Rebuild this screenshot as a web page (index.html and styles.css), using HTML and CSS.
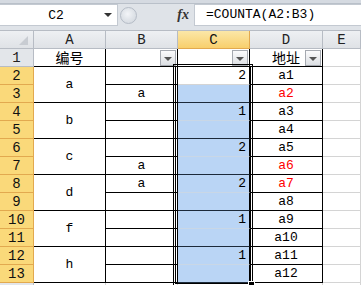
FILE: index.html
```html
<!DOCTYPE html>
<html lang="zh">
<head>
  <meta charset="UTF-8" />
  <title>COUNTA</title>
  <link rel="stylesheet" href="styles.css">
</head>
<body>

  <div class="ribbon-edge"></div>

  <div class="formula-bar">
    <div class="name-box">
      <span class="name">C2</span>
      <span class="drop"></span>
    </div>
    <div class="bar-tools">
      <span class="knob"></span>
      <span class="fx">fx</span>
    </div>
    <div class="formula">=COUNTA(A2:B3)</div>
  </div>

  <div class="sheet">
    <div class="hd corner"><span class="tri"></span></div>
    <div class="hd col">A</div>
    <div class="hd col">B</div>
    <div class="hd col on">C</div>
    <div class="hd col">D</div>
    <div class="hd col last">E</div>

    <div class="hd row">1</div>
    <div class="c b-all head">编号</div>
    <div class="c b-all"><span class="filter"></span></div>
    <div class="c b-all"><span class="filter"></span></div>
    <div class="c b-all head">地址<span class="filter"></span></div>
    <div class="c grid"></div>

    <div class="hd row on">2</div>
    <div class="c b-all merged span2">a</div>
    <div class="c b-all"></div>
    <div class="c sel active num">2</div>
    <div class="c b-all">a1</div>
    <div class="c grid"></div>

    <div class="hd row on">3</div>
    <div class="c b-all">a</div>
    <div class="c sel pair-end"></div>
    <div class="c b-all red">a2</div>
    <div class="c grid"></div>

    <div class="hd row on">4</div>
    <div class="c b-all merged span2">b</div>
    <div class="c b-all"></div>
    <div class="c sel num">1</div>
    <div class="c b-all">a3</div>
    <div class="c grid"></div>

    <div class="hd row on">5</div>
    <div class="c b-all"></div>
    <div class="c sel pair-end"></div>
    <div class="c b-all">a4</div>
    <div class="c grid"></div>

    <div class="hd row on">6</div>
    <div class="c b-all merged span2">c</div>
    <div class="c b-all"></div>
    <div class="c sel num">2</div>
    <div class="c b-all">a5</div>
    <div class="c grid"></div>

    <div class="hd row on">7</div>
    <div class="c b-all">a</div>
    <div class="c sel pair-end"></div>
    <div class="c b-all red">a6</div>
    <div class="c grid"></div>

    <div class="hd row on">8</div>
    <div class="c b-all merged span2">d</div>
    <div class="c b-all">a</div>
    <div class="c sel num">2</div>
    <div class="c b-all red">a7</div>
    <div class="c grid"></div>

    <div class="hd row on">9</div>
    <div class="c b-all"></div>
    <div class="c sel pair-end"></div>
    <div class="c b-all">a8</div>
    <div class="c grid"></div>

    <div class="hd row on">10</div>
    <div class="c b-all merged span2">f</div>
    <div class="c b-all"></div>
    <div class="c sel num">1</div>
    <div class="c b-all">a9</div>
    <div class="c grid"></div>

    <div class="hd row on">11</div>
    <div class="c b-all"></div>
    <div class="c sel pair-end"></div>
    <div class="c b-all">a10</div>
    <div class="c grid"></div>

    <div class="hd row on">12</div>
    <div class="c b-all merged span2">h</div>
    <div class="c b-all"></div>
    <div class="c sel num">1</div>
    <div class="c b-all">a11</div>
    <div class="c grid"></div>

    <div class="hd row on">13</div>
    <div class="c b-all"></div>
    <div class="c sel pair-end"></div>
    <div class="c b-all">a12</div>
    <div class="c grid"></div>

    <div class="hd row"></div>
    <div class="c grid"></div>
    <div class="c grid"></div>
    <div class="c grid"></div>
    <div class="c grid"></div>
    <div class="c grid"></div>

    <div class="selection"><span class="handle"></span></div>
  </div>

</body>
</html>
```

FILE: styles.css
```css
* {
  box-sizing: border-box;
}

body {
  margin: 0;
  width: 361px;
  height: 285px;
  overflow: hidden;
  background-color: #dfe3e8;
  font-family: "Liberation Mono", "Noto Sans CJK SC", monospace;
  font-size: 13px;
  color: #000;
}

.ribbon-edge {
  height: 4px;
  background-color: #d5dae1;
  border-bottom: 1px solid #b9c0c9;
}

/* formula bar */
.formula-bar {
  display: flex;
  height: 22px;
  margin-bottom: 4px;
}

.name-box {
  width: 118px;
  display: flex;
  align-items: center;
  background-color: #fff;
  border: 1px solid #c3c9d1;
  border-left: none;
}

.name {
  flex: 1;
  text-align: center;
  padding-left: 8px;
}

.drop {
  width: 0;
  height: 0;
  margin-right: 5px;
  border-left: 4px solid transparent;
  border-right: 4px solid transparent;
  border-top: 4px solid #333;
}

.bar-tools {
  width: 77px;
  display: flex;
  align-items: center;
  justify-content: space-between;
  border-right: 1px solid #c3c9d1;
}

.knob {
  width: 17px;
  height: 17px;
  margin-left: 2px;
  border-radius: 50%;
  border: 1px solid #b5bcc6;
  background: radial-gradient(circle at 45% 40%, #f3f5f8 0, #e1e5ea 45%, #cfd5dc 100%);
}

.fx {
  margin-right: 5px;
  font-family: "Liberation Serif", serif;
  font-style: italic;
  font-weight: bold;
  font-size: 14px;
  color: #333;
}

.formula {
  flex: 1;
  background-color: #fff;
  border-top: 1px solid #c3c9d1;
  border-bottom: 1px solid #c3c9d1;
  padding-left: 11px;
  line-height: 20px;
}

/* sheet grid */
.sheet {
  position: relative;
  display: grid;
  grid-template-columns: 34px 72px 72px 72px 73px 38px;
  grid-template-rows: 18px repeat(14, 18px);
  background-color: #fff;
  border-top: 1px solid #b7bcc4;
}

.hd {
  display: flex;
  align-items: center;
  justify-content: center;
  background: linear-gradient(#eef0f3, #dfe2e6);
  border-right: 1px solid #b7bcc4;
  border-bottom: 1px solid #b7bcc4;
  font-size: 14px;
  color: #222;
}

.hd.col {
  padding-top: 1px;
}

.hd.on {
  background: linear-gradient(#fbe7a8, #f8cf6c);
  border-color: #e2a94f;
  color: #111;
}

.hd.row {
  background: #e3e6ea;
}

.hd.row.on {
  background: #fad97a;
  border-color: #e2a94f;
}

.corner {
  position: relative;
}

.tri {
  position: absolute;
  right: 5px;
  bottom: 3px;
  width: 0;
  height: 0;
  border-left: 9px solid transparent;
  border-bottom: 9px solid #c8ccd2;
}

.c {
  position: relative;
  display: flex;
  align-items: flex-end;
  justify-content: center;
  padding-bottom: 1px;
  line-height: 15px;
  border-right: 1px solid #d4d4d4;
  border-bottom: 1px solid #d4d4d4;
  white-space: nowrap;
}

.b-all {
  border-color: #000;
}

.head {
  font-family: "Noto Sans CJK SC", sans-serif;
  font-size: 14px;
  align-items: center;
  padding-bottom: 0;
}

.merged {
  align-items: center;
  padding-bottom: 0;
}

.span2 {
  grid-row: span 2;
}

.sel {
  background-color: #bad5f5;
  border-right: 1px solid #000;
  border-bottom: 1px solid #c9d7e6;
}

.sel.active {
  background-color: #fff;
  border-bottom-color: #d4d4d4;
}

.sel.pair-end {
  border-bottom-color: #1c2a3a;
}

.num {
  justify-content: flex-end;
  padding-right: 3px;
}

.red {
  color: #f00;
}

.filter {
  position: absolute;
  top: 1px;
  right: 1px;
  width: 16px;
  height: 16px;
  border: 1px solid #a5a9b0;
  background: linear-gradient(#fbfbfc, #dcdfe3);
}

.filter::after {
  content: "";
  position: absolute;
  left: 3px;
  top: 6px;
  border-left: 4px solid transparent;
  border-right: 4px solid transparent;
  border-top: 4px solid #555;
}

.selection {
  position: absolute;
  left: 175px;
  top: 35px;
  width: 76px;
  height: 218px;
  border: 1px solid #000;
  outline: 1px solid #000;
  outline-offset: 1px;
  pointer-events: none;
}

.handle {
  position: absolute;
  right: -5px;
  bottom: -5px;
  width: 7px;
  height: 7px;
  background-color: #000;
  border: 1px solid #fff;
}
```
